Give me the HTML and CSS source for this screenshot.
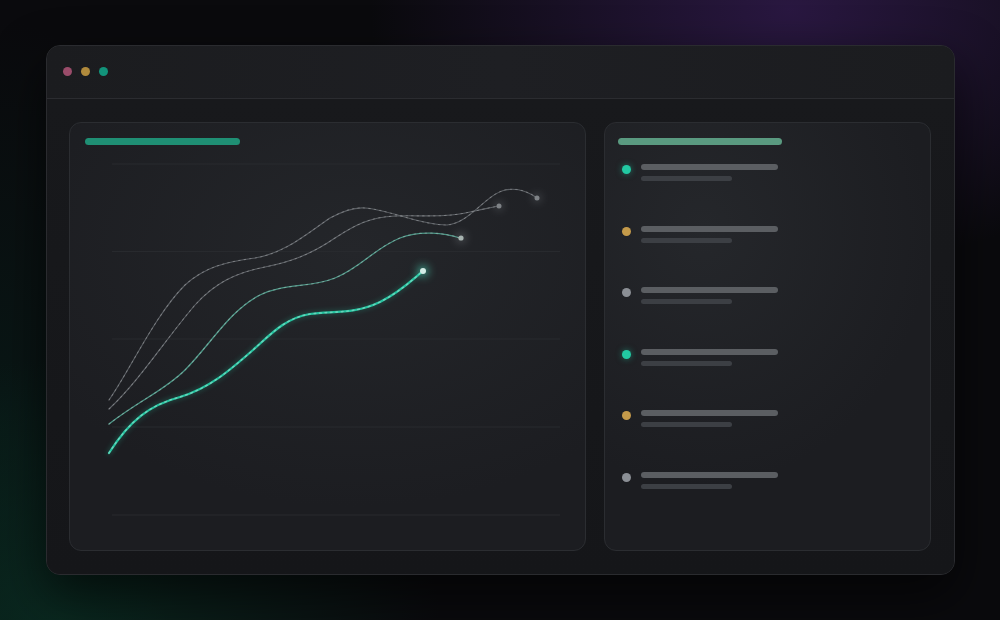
FILE: index.html
```html
<!DOCTYPE html>
<html>
<head>
<meta charset="utf-8">
<link rel="stylesheet" href="styles.css">
</head>
<body>
<div class="window">
  <div class="titlebar">
    <span class="dot dot-red"></span>
    <span class="dot dot-yellow"></span>
    <span class="dot dot-green"></span>
  </div>
  <div class="content">
    <section class="panel chart-panel">
      <div class="bar bar-title-green"></div>
      <svg class="chart" width="485" height="385" viewBox="85 150 485 385" xmlns="http://www.w3.org/2000/svg">
        <defs>
          <filter id="glow" x="-2" y="-2" width="5" height="5">
            <feGaussianBlur stdDeviation="4"/>
          </filter>
          <filter id="lineglow" x="-0.2" y="-0.2" width="1.4" height="1.4">
            <feGaussianBlur stdDeviation="2.5"/>
          </filter>
        </defs>
        <g class="grid">
          <line x1="112" y1="164" x2="560" y2="164"/>
          <line x1="112" y1="251.5" x2="560" y2="251.5"/>
          <line x1="112" y1="339" x2="560" y2="339"/>
          <line x1="112" y1="427" x2="560" y2="427"/>
          <line x1="112" y1="515" x2="560" y2="515"/>
        </g>
        <path class="l4" d="M109,400 C130,370 155,315 185,285 C205,267 225,262 255,258 C285,253 305,235 330,218 C345,210 355,207 365,208 C390,210 420,225 447,225 C470,223 485,195 505,190 C520,187 530,193 537,198"/>
        <path class="l4 shimmer" d="M109,400 C130,370 155,315 185,285 C205,267 225,262 255,258 C285,253 305,235 330,218 C345,210 355,207 365,208 C390,210 420,225 447,225 C470,223 485,195 505,190 C520,187 530,193 537,198"/>
        <path class="l3" d="M109,409 C140,380 165,340 195,305 C215,283 235,273 265,267 C290,262 310,255 335,238 C355,225 370,217 395,216 C420,215 445,218 470,212 C485,209 492,207 499,206"/>
        <path class="l3 shimmer" d="M109,409 C140,380 165,340 195,305 C215,283 235,273 265,267 C290,262 310,255 335,238 C355,225 370,217 395,216 C420,215 445,218 470,212 C485,209 492,207 499,206"/>
        <path class="l2" d="M109,424 C140,400 165,390 185,370 C210,345 230,310 260,295 C285,283 310,288 335,278 C360,268 375,248 400,238 C420,230 445,233 460,238"/>
        <path class="l2 shimmer" d="M109,424 C140,400 165,390 185,370 C210,345 230,310 260,295 C285,283 310,288 335,278 C360,268 375,248 400,238 C420,230 445,233 460,238"/>
        <path class="l1-glow" filter="url(#lineglow)" d="M109,453 C130,420 150,405 180,397 C210,388 230,370 253,350 C270,335 285,318 310,314 C335,311 355,314 380,302 C400,292 412,280 423,271"/>
        <path class="l1" d="M109,453 C130,420 150,405 180,397 C210,388 230,370 253,350 C270,335 285,318 310,314 C335,311 355,314 380,302 C400,292 412,280 423,271"/>
        <path class="l1 shimmer" d="M109,453 C130,420 150,405 180,397 C210,388 230,370 253,350 C270,335 285,318 310,314 C335,311 355,314 380,302 C400,292 412,280 423,271"/>
        <circle class="halo-teal" cx="423" cy="271" r="6" filter="url(#glow)"/>
        <circle class="end-bright" cx="423" cy="271" r="3"/>
        <circle class="halo-gray" cx="461" cy="238" r="5" filter="url(#glow)"/>
        <circle class="end-mid" cx="461" cy="238" r="2.6"/>
        <circle class="halo-gray" cx="499" cy="206" r="4" filter="url(#glow)"/>
        <circle class="end-dim" cx="499" cy="206" r="2.5"/>
        <circle class="halo-gray" cx="537" cy="198" r="4" filter="url(#glow)"/>
        <circle class="end-dim" cx="537" cy="198" r="2.5"/>
      </svg>
    </section>
    <section class="panel list-panel">
      <div class="bar bar-title-muted"></div>
      <ul class="items">
        <li class="item"><span class="status status-teal"></span><div class="lines"><span class="line-main"></span><span class="line-sub"></span></div></li>
        <li class="item"><span class="status status-gold"></span><div class="lines"><span class="line-main"></span><span class="line-sub"></span></div></li>
        <li class="item"><span class="status status-gray"></span><div class="lines"><span class="line-main"></span><span class="line-sub"></span></div></li>
        <li class="item"><span class="status status-teal"></span><div class="lines"><span class="line-main"></span><span class="line-sub"></span></div></li>
        <li class="item"><span class="status status-gold"></span><div class="lines"><span class="line-main"></span><span class="line-sub"></span></div></li>
        <li class="item"><span class="status status-gray"></span><div class="lines"><span class="line-main"></span><span class="line-sub"></span></div></li>
      </ul>
    </section>
  </div>
</div>
</body>
</html>
```
FILE: styles.css
```css
* { box-sizing: border-box; }
html, body { margin: 0; padding: 0; }
body {
  width: 1000px;
  height: 620px;
  overflow: hidden;
  font-family: "Inter", "Liberation Sans", sans-serif;
  background:
    radial-gradient(ellipse 420px 260px at 790px 10px, rgba(52, 28, 82, 0.75), rgba(52, 28, 82, 0) 100%),
    radial-gradient(ellipse 380px 260px at 60px 620px, rgba(10, 48, 36, 0.75), rgba(10, 48, 36, 0) 100%),
    radial-gradient(ellipse 200px 400px at 0px 420px, rgba(8, 36, 30, 0.5), rgba(8, 36, 30, 0) 100%),
    #0a0a0d;
  padding-top: 45px;
  padding-left: 46px;
}
.window {
  width: 909px;
  height: 530px;
  border-radius: 14px;
  border: 1px solid #2a2b2f;
  background: #17181b;
  box-shadow: 0 20px 50px rgba(0, 0, 0, 0.6);
  overflow: hidden;
  display: flex;
  flex-direction: column;
}
.titlebar {
  height: 53px;
  flex: none;
  background: linear-gradient(90deg, #1b1c1f, #1e1f23 50%, #1b1c1f);
  border-bottom: 1px solid #2b2c30;
  display: flex;
  align-items: center;
  padding-left: 16px;
  padding-bottom: 1px;
  gap: 9px;
}
.dot {
  width: 9px;
  height: 9px;
  border-radius: 50%;
}
.dot-red { background: #9a4c6a; }
.dot-yellow { background: #b08a3c; }
.dot-green { background: #12937a; }
.content {
  flex: 1;
  display: flex;
  gap: 18px;
  padding: 23px 23px 23px 22px;
  background: linear-gradient(180deg, #18191c, #151619);
}
.panel {
  height: 429px;
  border-radius: 12px;
  border: 1px solid #2b2d31;
  background: radial-gradient(ellipse 70% 60% at 55% 30%, #24262a, #1c1d21 100%);
}
.chart-panel {
  width: 517px;
  padding: 15px 0 0 15px;
  display: flex;
  flex-direction: column;
}
.list-panel {
  width: 327px;
  padding: 15px 0 0 13px;
  background: radial-gradient(ellipse 70% 60% at 30% 25%, #25272b, #1c1d21 100%);
}
.bar {
  height: 7px;
  border-radius: 4px;
  flex: none;
}
.bar-title-green {
  width: 155px;
  background: #1f8f74;
}
.bar-title-muted {
  width: 164px;
  background: #5a9a80;
}
.chart {
  display: block;
  margin-top: 5px;
  overflow: visible;
}
.grid line {
  stroke: #282a2e;
  stroke-width: 1;
}
path { fill: none; stroke-linecap: round; }
.l1 { stroke: #25c4a0; stroke-width: 2.2; }
.l1-glow { stroke: #25c4a0; stroke-width: 4; opacity: 0.25; }
.l2 { stroke: #4b9585; stroke-width: 1.3; }
.l3 { stroke: #5d6166; stroke-width: 1.1; }
.l4 { stroke: #5a5e63; stroke-width: 1.1; }
.shimmer {
  stroke: #ffffff;
  stroke-dasharray: 1.5 4;
  opacity: 0.22;
}
.l1.shimmer { opacity: 0.3; stroke-width: 1.6; }
.halo-teal { fill: #4fe0c0; opacity: 0.55; }
.halo-gray { fill: #9aa0a6; opacity: 0.35; }
.end-bright { fill: #d4ece6; }
.end-mid { fill: #a7b3b0; }
.end-dim { fill: #7e8286; }
.items {
  list-style: none;
  margin: 19px 0 0;
  padding: 0;
}
.item {
  height: 61.5px;
  display: flex;
  align-items: flex-start;
  gap: 10px;
  padding-left: 4px;
}
.status {
  width: 9px;
  height: 9px;
  border-radius: 50%;
  margin-top: 1px;
  flex: none;
}
.status-teal { background: #22c9a3; box-shadow: 0 0 6px rgba(34, 201, 163, 0.5); }
.status-gold { background: #c49a4a; }
.status-gray { background: #8b8f95; }
.lines {
  display: flex;
  flex-direction: column;
  gap: 6px;
}
.line-main {
  display: block;
  width: 137px;
  height: 6px;
  border-radius: 3px;
  background: #5b5e62;
}
.line-sub {
  display: block;
  width: 91px;
  height: 5px;
  border-radius: 3px;
  background: #3c3f44;
}
```
